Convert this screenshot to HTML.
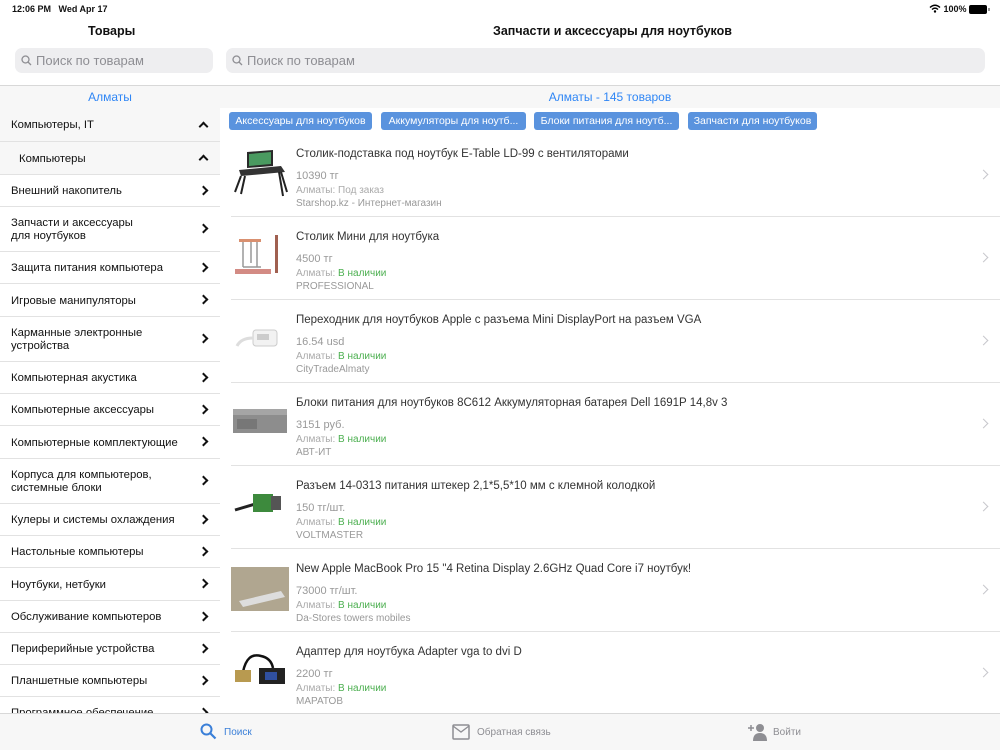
<!DOCTYPE html>
<html><head><meta charset="utf-8"><style>
*{margin:0;padding:0;box-sizing:border-box}
body{width:1000px;height:750px;overflow:hidden;background:#fff;font-family:"Liberation Sans",sans-serif;position:relative;color:#111}
.a{position:absolute}
.st{font-size:9px;font-weight:bold;top:4px}
.ttl{font-size:12.5px;font-weight:bold;top:24px}
.sb{top:48px;height:25px;background:#eeeef0;border-radius:7px;color:#8e8e93;font-size:13px;line-height:25px;padding-left:21px}
.sb svg{position:absolute;left:6px;top:7px}
.row{position:absolute;left:0;width:220px;font-size:11.3px;color:#111;padding-left:11px;display:flex;align-items:center;border-bottom:1px solid #e2e2e2;line-height:13px;padding-top:2px}
.row .ch{position:absolute;right:13px;top:50%;margin-top:-4px;width:7px;height:7px;border-right:2px solid #111;border-top:2px solid #111;transform:rotate(45deg)}
.row .up{position:absolute;right:13px;top:50%;margin-top:-2px;width:7px;height:7px;border-left:2px solid #111;border-top:2px solid #111;transform:rotate(45deg)}
.chip{position:absolute;top:112px;height:18px;background:#5a93de;color:#fff;font-size:10.5px;line-height:18px;text-align:center;border-radius:3px}
.it{position:absolute;left:231px;width:769px;height:83px;border-bottom:1px solid #e2e2e2}
.it .t{position:absolute;left:65px;top:14px;font-size:11.5px;color:#333}
.it .p{position:absolute;left:65px;top:36px;font-size:11px;color:#999}
.it .c{position:absolute;left:65px;top:51px;font-size:10px;color:#aaa}
.it .c b{font-weight:normal;color:#4caf50}
.it .s{position:absolute;left:65px;top:64px;font-size:10px;color:#999}
.it .im{position:absolute;left:0;top:12px;width:58px;height:58px}
.it .ar{position:absolute;right:13px;top:37px;width:7px;height:7px;border-right:1.3px solid #c7c7cc;border-top:1.3px solid #c7c7cc;transform:rotate(45deg)}
</style></head><body>
<div class="a st" style="left:12px">12:06 PM&nbsp;&nbsp;&nbsp;Wed Apr 17</div>
<div class="a st" style="left:929px">
<svg width="12" height="9" viewBox="0 0 12 9" style="vertical-align:-1px"><path d="M1 3.5Q6 -1 11 3.5" stroke="#000" stroke-width="1.5" fill="none"/><path d="M3 5.5Q6 2.8 9 5.5" stroke="#000" stroke-width="1.5" fill="none"/><circle cx="6" cy="7.5" r="1.2"/></svg> 100%</div>
<div class="a" style="left:969px;top:5px;width:18px;height:9px;border-radius:2px;background:#000"></div>
<div class="a" style="left:988px;top:8px;width:1.5px;height:3px;background:#999"></div>

<div class="a ttl" style="left:88px">Товары</div>
<div class="a ttl" style="left:493px">Запчасти и аксессуары для ноутбуков</div>
<div class="a sb" style="left:15px;width:198px"><svg width="11" height="11" viewBox="0 0 11 11"><circle cx="4.5" cy="4.5" r="3.5" stroke="#8e8e93" stroke-width="1.3" fill="none"/><path d="M7 7L10 10" stroke="#8e8e93" stroke-width="1.3"/></svg>Поиск по товарам</div>
<div class="a sb" style="left:226px;width:759px"><svg width="11" height="11" viewBox="0 0 11 11"><circle cx="4.5" cy="4.5" r="3.5" stroke="#8e8e93" stroke-width="1.3" fill="none"/><path d="M7 7L10 10" stroke="#8e8e93" stroke-width="1.3"/></svg>Поиск по товарам</div>
<div class="a" style="left:0;top:85px;width:1000px;height:1px;background:#d8d8d8"></div>

<div class="a" style="left:0;top:86px;width:1000px;height:22px;background:#f7f7f7"></div>
<div class="a" style="left:0;top:90px;width:220px;text-align:center;color:#2f86f5;font-size:12px">Алматы</div>
<div class="a" style="left:220px;top:90px;width:780px;text-align:center;color:#2f86f5;font-size:12px">Алматы - 145 товаров</div>

<div class="row" style="top:108px;height:34px;background:#f7f7f7">Компьютеры, IT<i class="up"></i></div>
<div class="row" style="top:142px;height:33px;background:#f7f7f7;padding-left:19px">Компьютеры<i class="up"></i></div>
<div class="row" style="top:175px;height:32px">Внешний накопитель<i class="ch"></i></div>
<div class="row" style="top:207px;height:45px">Запчасти и аксессуары<br>для ноутбуков<i class="ch"></i></div>
<div class="row" style="top:252px;height:32px">Защита питания компьютера<i class="ch"></i></div>
<div class="row" style="top:284px;height:33px">Игровые манипуляторы<i class="ch"></i></div>
<div class="row" style="top:317px;height:45px">Карманные электронные<br>устройства<i class="ch"></i></div>
<div class="row" style="top:362px;height:32px">Компьютерная акустика<i class="ch"></i></div>
<div class="row" style="top:394px;height:32px">Компьютерные аксессуары<i class="ch"></i></div>
<div class="row" style="top:426px;height:33px">Компьютерные комплектующие<i class="ch"></i></div>
<div class="row" style="top:459px;height:45px">Корпуса для компьютеров,<br>системные блоки<i class="ch"></i></div>
<div class="row" style="top:504px;height:32px">Кулеры и системы охлаждения<i class="ch"></i></div>
<div class="row" style="top:536px;height:32px">Настольные компьютеры<i class="ch"></i></div>
<div class="row" style="top:568px;height:33px">Ноутбуки, нетбуки<i class="ch"></i></div>
<div class="row" style="top:601px;height:32px">Обслуживание компьютеров<i class="ch"></i></div>
<div class="row" style="top:633px;height:32px">Периферийные устройства<i class="ch"></i></div>
<div class="row" style="top:665px;height:32px">Планшетные компьютеры<i class="ch"></i></div>
<div class="row" style="top:697px;height:32px">Программное обеспечение<i class="ch"></i></div>

<div class="chip" style="left:229px;width:143px">Аксессуары для ноутбуков</div>
<div class="chip" style="left:381px;width:145px">Аккумуляторы для ноутб...</div>
<div class="chip" style="left:534px;width:145px">Блоки питания для ноутб...</div>
<div class="chip" style="left:688px;width:129px">Запчасти для ноутбуков</div>

<div class="it" style="top:134px"><div class="im"><svg width="58" height="58"><path d="M16 6L42 4 42 20 16 22Z" fill="#2a2a2a"/><path d="M18 8L40 6 40 18 18 20Z" fill="#4a9a60"/><path d="M8 24L50 20 54 26 10 30Z" fill="#333"/><path d="M10 30L4 46M14 30L10 48M48 26L52 50M50 26L56 46" stroke="#222" stroke-width="2"/></svg></div><div class="t">Столик-подставка под ноутбук E-Table LD-99 с вентиляторами</div><div class="p">10390 тг</div><div class="c">Алматы: Под заказ</div><div class="s">Starshop.kz - Интернет-магазин</div><i class="ar"></i></div>
<div class="it" style="top:217px"><div class="im"><svg width="58" height="58"><rect x="8" y="10" width="22" height="3" fill="#d99070"/><path d="M12 13V38M26 13V38M12 38H30M20 13V34" stroke="#999" stroke-width="1.5"/><rect x="44" y="6" width="3" height="38" fill="#a06050"/><rect x="4" y="40" width="36" height="5" fill="#c05a50" opacity=".7"/></svg></div><div class="t">Столик Мини для ноутбука</div><div class="p">4500 тг</div><div class="c">Алматы: <b>В наличии</b></div><div class="s">PROFESSIONAL</div><i class="ar"></i></div>
<div class="it" style="top:300px"><div class="im"><svg width="58" height="58"><rect x="22" y="18" width="24" height="16" rx="3" fill="#f2f2f2" stroke="#ccc"/><path d="M22 26Q10 26 6 34" stroke="#ddd" stroke-width="3" fill="none"/><rect x="26" y="22" width="12" height="6" fill="#ccc"/></svg></div><div class="t">Переходник для ноутбуков Apple с разъема Mini DisplayPort на разъем VGA</div><div class="p">16.54 usd</div><div class="c">Алматы: <b>В наличии</b></div><div class="s">CityTradeAlmaty</div><i class="ar"></i></div>
<div class="it" style="top:383px"><div class="im"><svg width="58" height="58"><path d="M2 14H56V38H2Z" fill="#8d8d8d"/><rect x="2" y="14" width="54" height="6" fill="#a5a5a5"/><rect x="6" y="24" width="20" height="10" fill="#777"/></svg></div><div class="t">Блоки питания для ноутбуков 8C612 Аккумуляторная батарея Dell 1691P 14,8v 3</div><div class="p">3151 руб.</div><div class="c">Алматы: <b>В наличии</b></div><div class="s">АВТ-ИТ</div><i class="ar"></i></div>
<div class="it" style="top:466px"><div class="im"><svg width="58" height="58"><path d="M4 32L24 26" stroke="#222" stroke-width="3"/><rect x="22" y="16" width="20" height="18" fill="#3d8a3d"/><rect x="40" y="18" width="10" height="14" fill="#555"/></svg></div><div class="t">Разъем 14-0313 питания штекер 2,1*5,5*10 мм с клемной колодкой</div><div class="p">150 тг/шт.</div><div class="c">Алматы: <b>В наличии</b></div><div class="s">VOLTMASTER</div><i class="ar"></i></div>
<div class="it" style="top:549px"><div class="im"><svg width="58" height="58"><rect x="0" y="6" width="58" height="44" fill="#b0a690"/><path d="M8 40L50 30 54 36 12 46Z" fill="#ddd"/></svg></div><div class="t">New Apple MacBook Pro 15 "4 Retina Display 2.6GHz Quad Core i7 ноутбук!</div><div class="p">73000 тг/шт.</div><div class="c">Алматы: <b>В наличии</b></div><div class="s">Da-Stores towers mobiles</div><i class="ar"></i></div>
<div class="it" style="top:632px"><div class="im"><svg width="58" height="58"><path d="M12 28Q16 8 30 12Q40 14 42 24" stroke="#111" stroke-width="2.5" fill="none"/><rect x="4" y="26" width="16" height="12" fill="#b89a50"/><rect x="28" y="24" width="26" height="16" fill="#222"/><rect x="34" y="28" width="12" height="8" fill="#3050a0"/></svg></div><div class="t">Адаптер для ноутбука Adapter vga to dvi D</div><div class="p">2200 тг</div><div class="c">Алматы: <b>В наличии</b></div><div class="s">МАРАТОВ</div><i class="ar"></i></div>

<div class="a" style="left:0;top:713px;width:1000px;height:37px;background:#f7f7f7;border-top:1px solid #d8d8d8"></div>
<svg class="a" style="left:200px;top:723px" width="17" height="17" viewBox="0 0 17 17"><circle cx="6.5" cy="6.5" r="5" stroke="#3a7fd8" stroke-width="2" fill="none"/><path d="M10 10L15.5 15.5" stroke="#3a7fd8" stroke-width="2.2"/></svg>
<div class="a" style="left:224px;top:727px;font-size:10px;color:#3a7fd8">Поиск</div>
<svg class="a" style="left:452px;top:724px" width="18" height="16" viewBox="0 0 18 16"><rect x="1" y="1" width="16" height="14" rx="1" stroke="#8e8e93" stroke-width="1.5" fill="none"/><path d="M1 2L9 8 17 2" stroke="#8e8e93" stroke-width="1.3" fill="none"/></svg>
<div class="a" style="left:477px;top:727px;font-size:10px;color:#8e8e93">Обратная связь</div>
<svg class="a" style="left:748px;top:723px" width="20" height="18" viewBox="0 0 20 18"><path d="M0 5H6M3 2V8" stroke="#8e8e93" stroke-width="1.5"/><circle cx="12" cy="5" r="4" fill="#8e8e93"/><path d="M5 18Q5 10 12 10Q19 10 19 18Z" fill="#8e8e93"/></svg>
<div class="a" style="left:773px;top:727px;font-size:10px;color:#8e8e93">Войти</div>
</body></html>
